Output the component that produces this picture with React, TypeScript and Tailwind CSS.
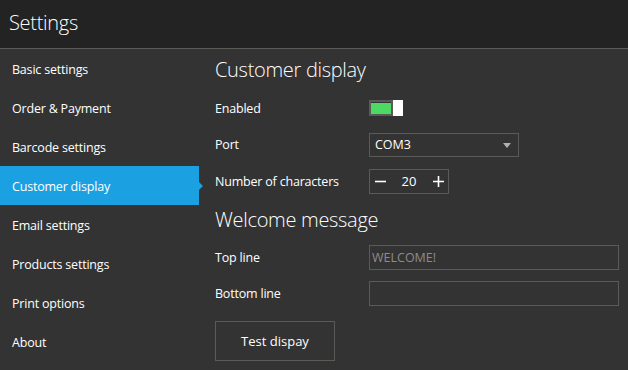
import { useState } from "react";

const menu = [
  "Basic settings",
  "Order & Payment",
  "Barcode settings",
  "Customer display",
  "Email settings",
  "Products settings",
  "Print options",
  "About",
];

const Row = ({ label, children, h = "h-[36px]" }: { label: string; children: React.ReactNode; h?: string }) => (
  <div className={`flex items-center ${h}`}>
    <div className="w-[154px] shrink-0 pt-[2px] text-[12.5px] tracking-[-0.2px] text-white">{label}</div>
    {children}
  </div>
);

const App = () => {
  const [active] = useState("Customer display");
  const [count, setCount] = useState(20);

  return (
    <div
      className="flex h-[370px] w-[628px] flex-col overflow-hidden bg-[#333333] text-white"
      style={{ fontFamily: '"Open Sans", "Noto Sans", sans-serif' }}
    >
      <div className="flex h-[49px] shrink-0 items-center border-b border-[#5a5a57] bg-[#232323] pl-[9px]">
        <h1 className="text-[20px] font-light tracking-[-0.3px] pb-[2px]">Settings</h1>
      </div>

      <div className="flex flex-1">
        <nav className="w-[200px] shrink-0">
          <ul>
            {menu.map((item) => (
              <li key={item} className="relative">
                <div
                  className={`flex h-[39px] items-center pl-[12px] pt-[3px] text-[12.5px] tracking-[-0.2px] ${
                    item === active ? "w-[199px] bg-[#1ba1e2]" : ""
                  }`}
                >
                  {item}
                </div>
                {item === active && (
                  <span className="absolute left-[199px] top-[16px] h-0 w-0 border-y-[4px] border-l-[4px] border-y-transparent border-l-[#1ba1e2]" />
                )}
              </li>
            ))}
          </ul>
        </nav>

        <main className="flex-1 pl-[15px]">
          <h2 className="flex h-[41px] items-center pt-[1px] text-[20px] font-light tracking-[-0.3px]">Customer display</h2>

          <Row label="Enabled">
            <div className="flex h-[16px] items-stretch">
              <div className="flex w-[24px] items-center border-2 border-[#5a5a57] bg-[#333333] p-0">
                <div className="h-[11px] w-full bg-[#4cd964]" />
              </div>
              <div className="w-[10px] bg-white" />
            </div>
          </Row>

          <Row label="Port" h="h-[37px]">
            <div className="flex h-[24px] w-[150px] items-center justify-between border border-[#5a5a57] pl-[5px] pr-[7px] pt-[1px] text-[12.5px]">
              <span>COM3</span>
              <svg width="8" height="5" viewBox="0 0 8 5">
                <path d="M0 0h8L4 5z" fill="#b0b0b0" />
              </svg>
            </div>
          </Row>

          <Row label="Number of characters">
            <div className="flex h-[25px] w-[80px] items-center justify-between border border-[#5a5a57] px-[4px]">
              <button onClick={() => setCount(count - 1)} className="flex h-[16px] w-[12px] items-center justify-center">
                <svg width="11" height="11" viewBox="0 0 11 11">
                  <path d="M0 5.5h11" stroke="#fff" strokeWidth="1.6" />
                </svg>
              </button>
              <span className="pt-[1px] text-[13px]">{count}</span>
              <button onClick={() => setCount(count + 1)} className="flex h-[16px] w-[12px] items-center justify-center">
                <svg width="11" height="11" viewBox="0 0 11 11">
                  <path d="M0 5.5h11M5.5 0v11" stroke="#fff" strokeWidth="1.6" />
                </svg>
              </button>
            </div>
          </Row>

          <h2 className="flex h-[40px] items-center pt-[1px] text-[20px] font-light tracking-[-0.3px]">Welcome message</h2>

          <Row label="Top line">
            <input
              className="h-[25px] w-[250px] border border-[#5a5a57] bg-transparent px-[2px] text-[12.5px] text-[#8c8c8c] outline-none"
              defaultValue="WELCOME!"
            />
          </Row>

          <Row label="Bottom line">
            <input className="h-[25px] w-[250px] border border-[#5a5a57] bg-transparent px-[2px] text-[12.5px] outline-none" />
          </Row>

          <button className="mt-[10px] h-[40px] w-[120px] border border-[#5a5a57] pt-[1px] text-[13px]">Test dispay</button>
        </main>
      </div>
    </div>
  );
};

export default App;
